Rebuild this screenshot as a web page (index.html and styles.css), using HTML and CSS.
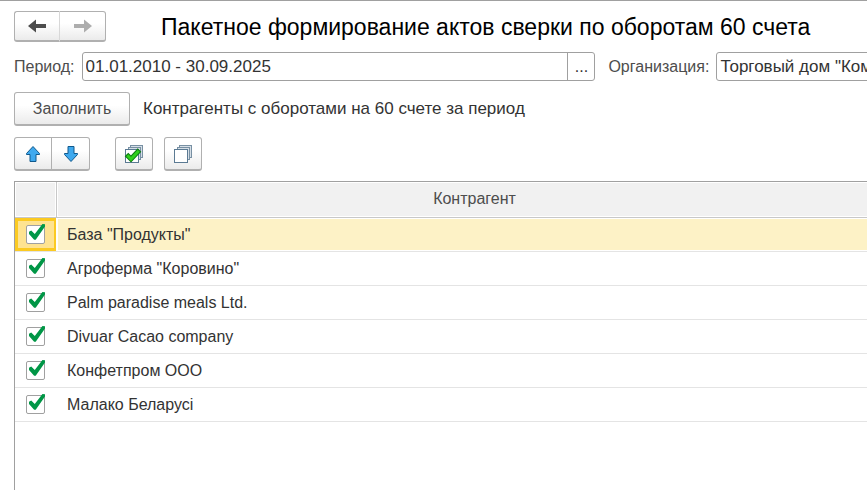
FILE: index.html
```html
<!DOCTYPE html>
<html lang="ru">
<head>
    <meta charset="UTF-8">
    <meta name="viewport" content="width=device-width, initial-scale=1.0">
    <title>Пакетное формирование актов сверки</title>
    <link rel="stylesheet" href="styles.css">
</head>
<body>
    <main class="form">
        <header class="form-header">
            <div class="btn-group">
                <button type="button" class="btn btn-nav" aria-label="Назад">
                    <svg width="18" height="14" viewBox="0 0 18 14"><path d="M0 7 L8 0.500 V5 H18 V9 H8 V13.500 Z" fill="#4d4d4d"/></svg>
                </button>
                <button type="button" class="btn btn-nav" aria-label="Вперед">
                    <svg width="18" height="14" viewBox="0 0 18 14"><path d="M18 7 L10 0.500 V5 H0 V9 H10 V13.500 Z" fill="#adadad"/></svg>
                </button>
            </div>
            <h1 class="form-title">Пакетное формирование актов сверки по оборотам 60 счета</h1>
        </header>

        <div class="fields">
            <label class="field-label" for="period">Период:</label>
            <div class="field field-period">
                <input type="text" id="period" value="01.01.2010 - 30.09.2025">
                <button type="button" class="field-more" aria-label="Выбрать период">...</button>
            </div>
            <label class="field-label" for="org">Организация:</label>
            <div class="field field-org">
                <input type="text" id="org" value='Торговый дом "Комплексный"'>
            </div>
        </div>

        <div class="actions">
            <button type="button" class="btn btn-fill">Заполнить</button>
            <span class="hint">Контрагенты с оборотами на 60 счете за период</span>
        </div>

        <div class="toolbar">
            <div class="btn-group">
                <button type="button" class="btn btn-icon" aria-label="Переместить вверх">
                    <svg width="16" height="18" viewBox="0 0 16 18"><path d="M8 1.5 L14.5 8.5 V9.500 H11 V16.5 H5 V9.500 H1.5 V8.500 Z" fill="#3fa9ee" stroke="#10598c"/></svg>
                </button>
                <button type="button" class="btn btn-icon" aria-label="Переместить вниз">
                    <svg width="16" height="18" viewBox="0 0 16 18"><path d="M8 16.5 L1.5 9.5 V8.500 H5 V1.5 H11 V8.5 H14.5 V9.500 Z" fill="#3fa9ee" stroke="#10598c"/></svg>
                </button>
            </div>
            <button type="button" class="btn btn-icon btn-check-all" aria-label="Установить флажки">
                <svg width="20" height="20" viewBox="0 0 20 20">
                    <g fill="#d5dee6" stroke="#7890a3">
                        <rect x="6.5" y="1.5" width="12" height="12"/>
                        <rect x="4.5" y="3.5" width="12" height="12"/>
                    </g>
                    <rect x="1.5" y="5.5" width="13" height="13" fill="#fff" stroke="#5b7a93"/>
                    <path d="M2.500 10.500 L7 15 L15.500 6" fill="none" stroke="#0d7a12" stroke-width="5"/>
                    <path d="M3.300 11.300 L7 15 L14.800 6.800" fill="none" stroke="#2fd01c" stroke-width="3"/>
                </svg>
            </button>
            <button type="button" class="btn btn-icon" aria-label="Снять флажки">
                <svg width="20" height="20" viewBox="0 0 20 20">
                    <g fill="#d5dee6" stroke="#7890a3">
                        <rect x="6.5" y="1.5" width="12" height="12"/>
                        <rect x="4.5" y="3.5" width="12" height="12"/>
                    </g>
                    <rect x="1.5" y="5.5" width="13" height="13" fill="#fff" stroke="#5b7a93"/>
                </svg>
            </button>
        </div>

        <div class="list">
            <table>
                <thead>
                    <tr><th class="col-check"></th><th>Контрагент</th></tr>
                </thead>
                <tbody>
                    <tr class="current">
                        <td class="col-check"><input type="checkbox" id="c1" checked></td>
                        <td><label for="c1">База "Продукты"</label></td>
                    </tr>
                    <tr>
                        <td class="col-check"><input type="checkbox" id="c2" checked></td>
                        <td><label for="c2">Агроферма "Коровино"</label></td>
                    </tr>
                    <tr>
                        <td class="col-check"><input type="checkbox" id="c3" checked></td>
                        <td><label for="c3">Palm paradise meals Ltd.</label></td>
                    </tr>
                    <tr>
                        <td class="col-check"><input type="checkbox" id="c4" checked></td>
                        <td><label for="c4">Divuar Cacao company</label></td>
                    </tr>
                    <tr>
                        <td class="col-check"><input type="checkbox" id="c5" checked></td>
                        <td><label for="c5">Конфетпром ООО</label></td>
                    </tr>
                    <tr>
                        <td class="col-check"><input type="checkbox" id="c6" checked></td>
                        <td><label for="c6">Малако Беларусі</label></td>
                    </tr>
                </tbody>
            </table>
        </div>
    </main>
</body>
</html>
```
FILE: styles.css
```css
:root {
    --border: #a0a0a0;
    --btn-border: #b0b0b0;
    --text: #333333;
    --label: #4d4d4d;
    --row-line: #e4e4e4;
    --current: #fdf2c6;
    --accent: #fbca22;
}

* {
    box-sizing: border-box;
}

body {
    margin: 0;
    overflow: hidden;
    background: #fff;
    color: var(--text);
    font-family: "Liberation Sans", Arial, sans-serif;
    font-size: 16px;
    line-height: 20px;
}

button,
input {
    font: inherit;
    color: inherit;
    margin: 0;
}

svg {
    display: block;
}

/* the form is a bit wider than the window */
.form {
    display: flex;
    flex-direction: column;
    min-height: 100vh;
    margin-right: -26px;
    padding: 10px 0 0 14px;
    border-top: 1px solid var(--border);
}

.form-header {
    display: flex;
    align-items: center;
    gap: 55px;
    height: 31px;
}

.form-title {
    margin: 0;
    color: #000;
    font-size: 23px;
    font-weight: normal;
    line-height: 28px;
    white-space: nowrap;
}

/* buttons */
.btn {
    display: flex;
    align-items: center;
    justify-content: center;
    height: 34px;
    padding: 0;
    border: 1px solid var(--btn-border);
    border-bottom: 2px solid var(--btn-border);
    border-radius: 3px;
    background: linear-gradient(#fff 40%, #ebebeb);
    color: var(--label);
}

.btn-group {
    display: flex;
}

.btn-group .btn:first-child {
    border-radius: 3px 0 0 3px;
}

.btn-group .btn:last-child {
    border-left: 0;
    border-radius: 0 3px 3px 0;
}

.btn-nav {
    width: 46px;
    height: 31px;
}

.btn-nav:first-child {
    border-right-color: #d8d8d8;
}

.btn-icon {
    width: 38px;
}

.btn-fill {
    width: 116px;
}

/* fields */
.fields {
    display: flex;
    align-items: center;
    margin: 10px 4px 0 0;
}

.field-label {
    color: var(--label);
    white-space: nowrap;
}

.field {
    display: flex;
    min-width: 0;
    height: 29px;
    margin-left: 7px;
    border: 1px solid var(--border);
    border-radius: 3px;
    background: #fff;
}

.field-period {
    flex: 3 1 0;
    margin-right: 13px;
}

.field-org {
    flex: 1 1 0;
}

.field input {
    flex: 1;
    min-width: 0;
    padding: 0 3px;
    border: 0;
    background: none;
    outline: none;
    font-size: 17px;
}

.field-more {
    width: 27px;
    padding: 0;
    border: 0;
    border-left: 1px solid var(--border);
    background: none;
}

.actions {
    display: flex;
    align-items: center;
    gap: 13px;
    margin-top: 11px;
}

.hint {
    font-size: 17px;
}

.toolbar {
    display: flex;
    margin-top: 11px;
}

.btn-check-all {
    margin: 0 11px 0 25px;
}

/* list */
.list {
    flex: 1;
    margin-top: 10px;
    border: 1px solid var(--border);
    border-bottom: 0;
}

table {
    width: 100%;
    border-collapse: separate;
    border-spacing: 0;
    table-layout: fixed;
}

th {
    height: 36px;
    padding: 0 0 2px;
    border-bottom: 1px solid #c8c8c8;
    background: #f1f1f1;
    box-shadow: inset 0 0 0 1px #fff;
    color: var(--label);
    font-weight: normal;
}

td {
    height: 34px;
    padding: 0 10px;
    border-bottom: 1px solid var(--row-line);
}

.col-check {
    width: 42px;
    padding: 0;
}

th.col-check {
    border-right: 1px solid #c8c8c8;
}

td.col-check {
    padding-left: 11px;
}

.current td {
    background: var(--current);
    box-shadow: inset 0 0 0 1px #fff;
}

.current td.col-check {
    background: #fee391;
    box-shadow: inset -1px 0 #fff, inset 0 0 0 3px var(--accent);
}

input[type="checkbox"] {
    display: block;
    width: 19px;
    height: 19px;
    appearance: none;
    border: 1px solid var(--border);
    border-radius: 2px;
    background: #fff;
    position: relative;
}

/* the tick sticks out over the top edge of the box */
input[type="checkbox"]:checked::after {
    content: "";
    position: absolute;
    left: 2px;
    top: -2px;
    width: 16px;
    height: 16px;
    background: #009646;
    clip-path: polygon(0 48%, 14% 40%, 36% 62%, 84% 0, 100% 2%, 100% 16%, 42% 98%, 32% 98%, 0 62%);
}
```
